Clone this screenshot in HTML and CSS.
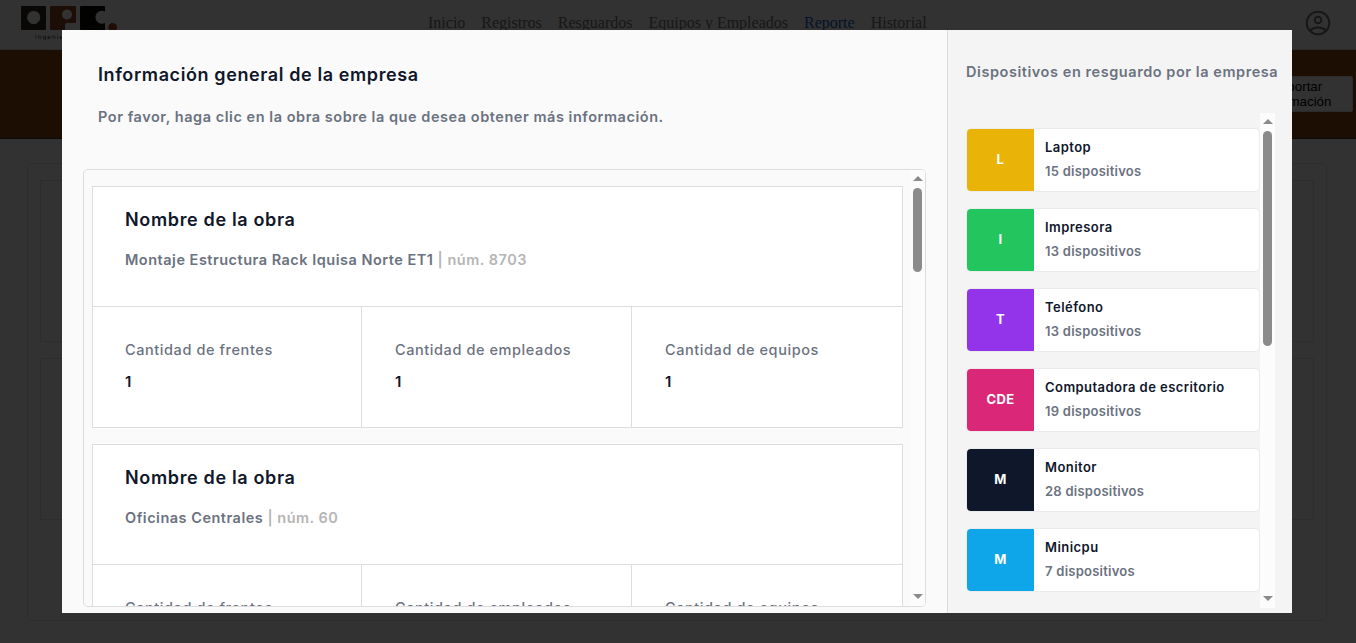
FILE: index.html
```html
<!DOCTYPE html>
<html lang="es">
<head>
<meta charset="utf-8">
<title>Reporte</title>
<link rel="stylesheet" href="styles.css">
</head>
<body>
<header class="topbar">
  <div class="logo">
    <svg width="98" height="26" viewBox="0 0 98 26">
      <path fill="#302c26" fill-rule="evenodd" d="M1 0H24Q25 0 25 1V23Q25 24 24 24H1Q0 24 0 23V1Q0 0 1 0ZM12.700 5a6.500 6.500 0 1 0 .01 0Z"/>
      <path fill="#8c4026" fill-rule="evenodd" d="M30 0H54Q55 0 55 1V17H46Q44 17 44 19V24H30Q29 24 29 23V1Q29 0 30 0ZM46 3.500a5 5 0 1 0 .01 0Z"/>
      <path fill="#0c0c08" d="M60 0H83Q84 0 84 1V5.500A6.500 6.500 0 1 0 84 17V24H60Q59 24 59 23V1Q59 0 60 0Z"/>
      <circle cx="91.700" cy="21.300" r="4.400" fill="#a04022"/>
    </svg>
    <span class="logo-text">ingeniería</span>
  </div>
  <nav class="nav">
    <a>Inicio</a><a>Registros</a><a>Resguardos</a><a>Equipos y Empleados</a><a class="active">Reporte</a><a>Historial</a>
  </nav>
  <svg class="user" width="26" height="26" viewBox="0 0 26 26" fill="none" stroke="#767676" stroke-width="2">
    <circle cx="13" cy="13" r="11.300"/><circle cx="13" cy="10" r="3.300"/><path d="M5 20.500C9 16.500 17 16.500 21 20.500"/>
  </svg>
</header>
<section class="hero"><button class="export">Exportar<br>información</button></section>
<main class="page"><div class="page-card"></div><div class="page-card"></div></main>

<div class="overlay">
  <div class="modal">
    <section class="general">
      <h2 class="title">Información general de la empresa</h2>
      <p class="hint">Por favor, haga clic en la obra sobre la que desea obtener más información.</p>
      <div class="works">
        <div class="works-list">
          <article class="work">
            <div class="work-head">
              <h3 class="work-title">Nombre de la obra</h3>
              <p class="work-name">Montaje Estructura Rack Iquisa Norte ET1 <span class="num">| núm. 8703</span></p>
            </div>
            <div class="stats">
              <div class="stat"><span class="label">Cantidad de frentes</span><b class="value">1</b></div>
              <div class="stat"><span class="label">Cantidad de empleados</span><b class="value">1</b></div>
              <div class="stat"><span class="label">Cantidad de equipos</span><b class="value">1</b></div>
            </div>
          </article>
          <article class="work">
            <div class="work-head">
              <h3 class="work-title">Nombre de la obra</h3>
              <p class="work-name">Oficinas Centrales <span class="num">| núm. 60</span></p>
            </div>
            <div class="stats">
              <div class="stat"><span class="label">Cantidad de frentes</span><b class="value">1</b></div>
              <div class="stat"><span class="label">Cantidad de empleados</span><b class="value">1</b></div>
              <div class="stat"><span class="label">Cantidad de equipos</span><b class="value">1</b></div>
            </div>
          </article>
        </div>
        <div class="scroll"><i class="up"></i><i class="thumb thumb-works"></i><i class="down"></i></div>
      </div>
    </section>
    <aside class="devices">
      <h2 class="devices-title">Dispositivos en resguardo por la empresa</h2>
      <div class="devices-body">
        <div class="devices-list">
          <div class="device"><span class="badge yellow">L</span><div class="info"><b>Laptop</b><span>15 dispositivos</span></div></div>
          <div class="device"><span class="badge green">I</span><div class="info"><b>Impresora</b><span>13 dispositivos</span></div></div>
          <div class="device"><span class="badge purple">T</span><div class="info"><b>Teléfono</b><span>13 dispositivos</span></div></div>
          <div class="device"><span class="badge pink">CDE</span><div class="info"><b>Computadora de escritorio</b><span>19 dispositivos</span></div></div>
          <div class="device"><span class="badge navy">M</span><div class="info"><b>Monitor</b><span>28 dispositivos</span></div></div>
          <div class="device"><span class="badge sky">M</span><div class="info"><b>Minicpu</b><span>7 dispositivos</span></div></div>
        </div>
        <div class="scroll"><i class="up"></i><i class="thumb thumb-devices"></i><i class="down"></i></div>
      </div>
    </aside>
  </div>
</div>
</body>
</html>
```
FILE: styles.css
```css
* { box-sizing: border-box; }
body { margin: 0; height: 643px; overflow: hidden; background: #fafafa; font-family: "Liberation Serif", serif; }
h2, h3, p { margin: 0; }

.topbar { display: flex; justify-content: space-between; height: 50px; padding: 0 25px 0 21px; border-bottom: 1px solid #dedede; background: #fafafa; }
.logo { display: flex; flex-direction: column; width: 98px; padding-top: 6px; }
.logo svg { flex: none; }
.logo-text { padding-left: 14px; font: 6px/9px "DejaVu Sans", sans-serif; letter-spacing: 1px; color: #222; }
.nav { display: flex; gap: 16px; padding-top: 13px; font-size: 16px; line-height: 20px; color: #737373; width: 500px; margin-left: 192px; margin-right: 260px; white-space: nowrap; }
.nav .active { color: #1464c8; }
.user { margin-top: 10px; }

.hero { display: flex; justify-content: flex-end; align-items: flex-start; height: 89px; padding: 26px 3px 0; border-bottom: 1px solid #333; background: #8c460c; }
.export { width: 112px; height: 36px; padding: 0; border: 1px solid #dcdcdc; border-radius: 2px; background: #fafafa; color: #000; font: 13.33px/15px "Liberation Sans", Arial, sans-serif; }
.page { display: flex; flex-direction: column; gap: 16px; width: 1300px; height: 458px; margin: 24px 0 0 27px; padding: 16px 12px; border: 1px solid #e2e2e2; border-radius: 5px; }
.page-card { height: 162px; border: 1px solid #e2e2e2; }

.overlay { position: fixed; inset: 0; display: flex; padding: 30px 64px 30px 62px; background: rgba(0, 0, 0, .8); font-family: Inter, sans-serif; }
.modal { display: flex; width: 1230px; height: 583px; background: #fafafa; }

.general { width: 886px; padding: 32px 21px 0; border-right: 1px solid #ddd; }
.title { padding-left: 15px; font-size: 18px; line-height: 26px; font-weight: 600; letter-spacing: .6px; color: #0f172a; white-space: nowrap; }
.hint { margin-top: 17px; padding-left: 15px; font-size: 14.5px; line-height: 24px; font-weight: 600; letter-spacing: .54px; color: #6b7280; white-space: nowrap; }
.works { display: flex; justify-content: space-between; width: 843px; height: 438px; margin-top: 40px; padding-left: 8px; overflow: hidden; border: 1px solid #ddd; border-radius: 5px; }
.works-list { display: flex; flex-direction: column; gap: 16px; padding-top: 16px; width: 811px; }
.work { flex: none; height: 242px; border: 1px solid #ddd; background: #fff; }
.work-head { height: 119px; padding: 20px 32px 0; }
.work-title { font-size: 18px; line-height: 26px; font-weight: 600; letter-spacing: .65px; color: #0f172a; }
.work-name { margin-top: 15px; font-size: 14.5px; line-height: 24px; font-weight: 600; letter-spacing: .5px; color: #6b7280; white-space: nowrap; }
.num { color: #b5b5b5; }
.stats { display: grid; grid-template-columns: 269px 270px 1fr; height: 121px; border-top: 1px solid #ddd; }
.stat { display: flex; flex-direction: column; gap: 8px; padding: 31px 0 0 32px; border-right: 1px solid #ddd; }
.stat + .stat { padding-left: 33px; }
.stat:last-child { border-right: 0; }
.label { font-size: 14.5px; line-height: 24px; font-weight: 500; letter-spacing: .58px; color: #6b7280; }
.value { font-size: 15px; line-height: 24px; font-weight: 600; color: #0f172a; }

.scroll { display: flex; flex-direction: column; align-items: center; width: 15px; padding: 6px 0 7px; background: #fcfcfc; }
.up { border: 5px solid transparent; border-top: 0; border-bottom: 5px solid #8b8b8b; }
.down { margin-top: auto; border: 5px solid transparent; border-bottom: 0; border-top: 5px solid #8b8b8b; }
.thumb { width: 9px; margin-top: 7px; border-radius: 5px; background: #8b8b8b; }
.thumb-works { height: 84px; }
.thumb-devices { height: 215px; }

.devices { width: 344px; padding: 30px 0 0 18px; background: #f4f4f4; }
.devices-title { font-size: 14.5px; line-height: 24px; font-weight: 600; letter-spacing: .56px; color: #6b7280; white-space: nowrap; }
.devices-body { display: flex; height: 495px; margin-top: 29px; }
.devices-list { display: flex; flex-direction: column; gap: 16px; width: 294px; padding-top: 15px; }
.device { display: flex; height: 64px; overflow: hidden; border: 1px solid #ebebeb; border-radius: 5px; background: #fff; }
.badge { display: flex; align-items: center; justify-content: center; width: 67px; padding-bottom: 2px; color: #fff; font-size: 13px; font-weight: 700; letter-spacing: .4px; }
.info { display: flex; flex-direction: column; padding: 6px 11px; font-size: 13px; line-height: 24px; font-weight: 600; white-space: nowrap; }
.info b { font-weight: 600; letter-spacing: .45px; color: #0f172a; }
.info span { letter-spacing: .25px; color: #6b7280; }
.yellow { background: #eab308; }
.green { background: #22c55e; }
.purple { background: #9333ea; }
.pink { background: #db2777; }
.navy { background: #0f172a; }
.sky { background: #0ea5e9; }
```
